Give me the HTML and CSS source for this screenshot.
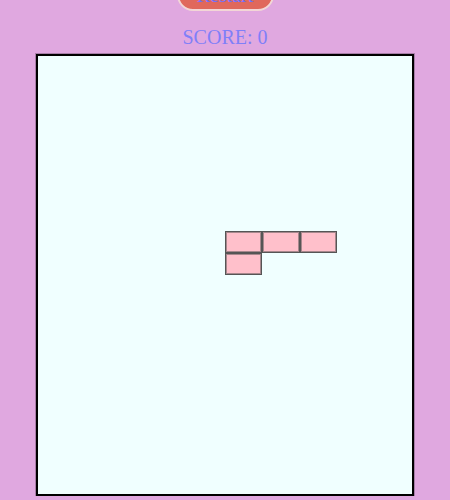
FILE: index.html
```html
<!DOCTYPE html>
<html>
<head>
<meta charset="utf-8">
<link rel="stylesheet" href="styles.css">
</head>
<body>
<div class="page">
  <button class="restart">Restart</button>
  <div class="score">SCORE: 0</div>
  <div class="board">
    <div class="cell c5 r8"></div>
    <div class="cell c6 r8"></div>
    <div class="cell c7 r8"></div>
    <div class="cell c5 r9"></div>
  </div>
</div>
</body>
</html>
```
FILE: styles.css
```css
html, body {
  margin: 0;
  padding: 0;
  background: #e0a8e0;
  font-family: "Liberation Serif", "Times New Roman", serif;
}
.page {
  display: flex;
  flex-direction: column;
  align-items: center;
}
.restart {
  margin-top: -21px;
  width: 97px;
  height: 32px;
  border: 2px solid #f2d6d6;
  border-radius: 16px;
  background: #e0685c;
  color: #7070ff;
  font-family: "Liberation Serif", serif;
  font-size: 20px;
  padding: 0;
}
.score {
  margin-top: 15px;
  font-size: 20px;
  line-height: 23px;
  color: #7f7ff8;
}
.board {
  margin-top: 5px;
  width: 374px;
  height: 438px;
  border: 2px solid #000;
  box-shadow: 0 0 0 1px rgba(0,0,0,0.25);
  background: #f0ffff;
  display: grid;
  grid-template-columns: repeat(10, 1fr);
  grid-template-rows: repeat(20, 1fr);
}
.cell {
  background: #ffc0cb;
  border: 1px solid #555;
  box-shadow: inset 0 0 0 1px rgba(80,80,80,0.5);
}
.c5 { grid-column: 6; }
.c6 { grid-column: 7; }
.c7 { grid-column: 8; }
.r8 { grid-row: 9; }
.r9 { grid-row: 10; }
```
